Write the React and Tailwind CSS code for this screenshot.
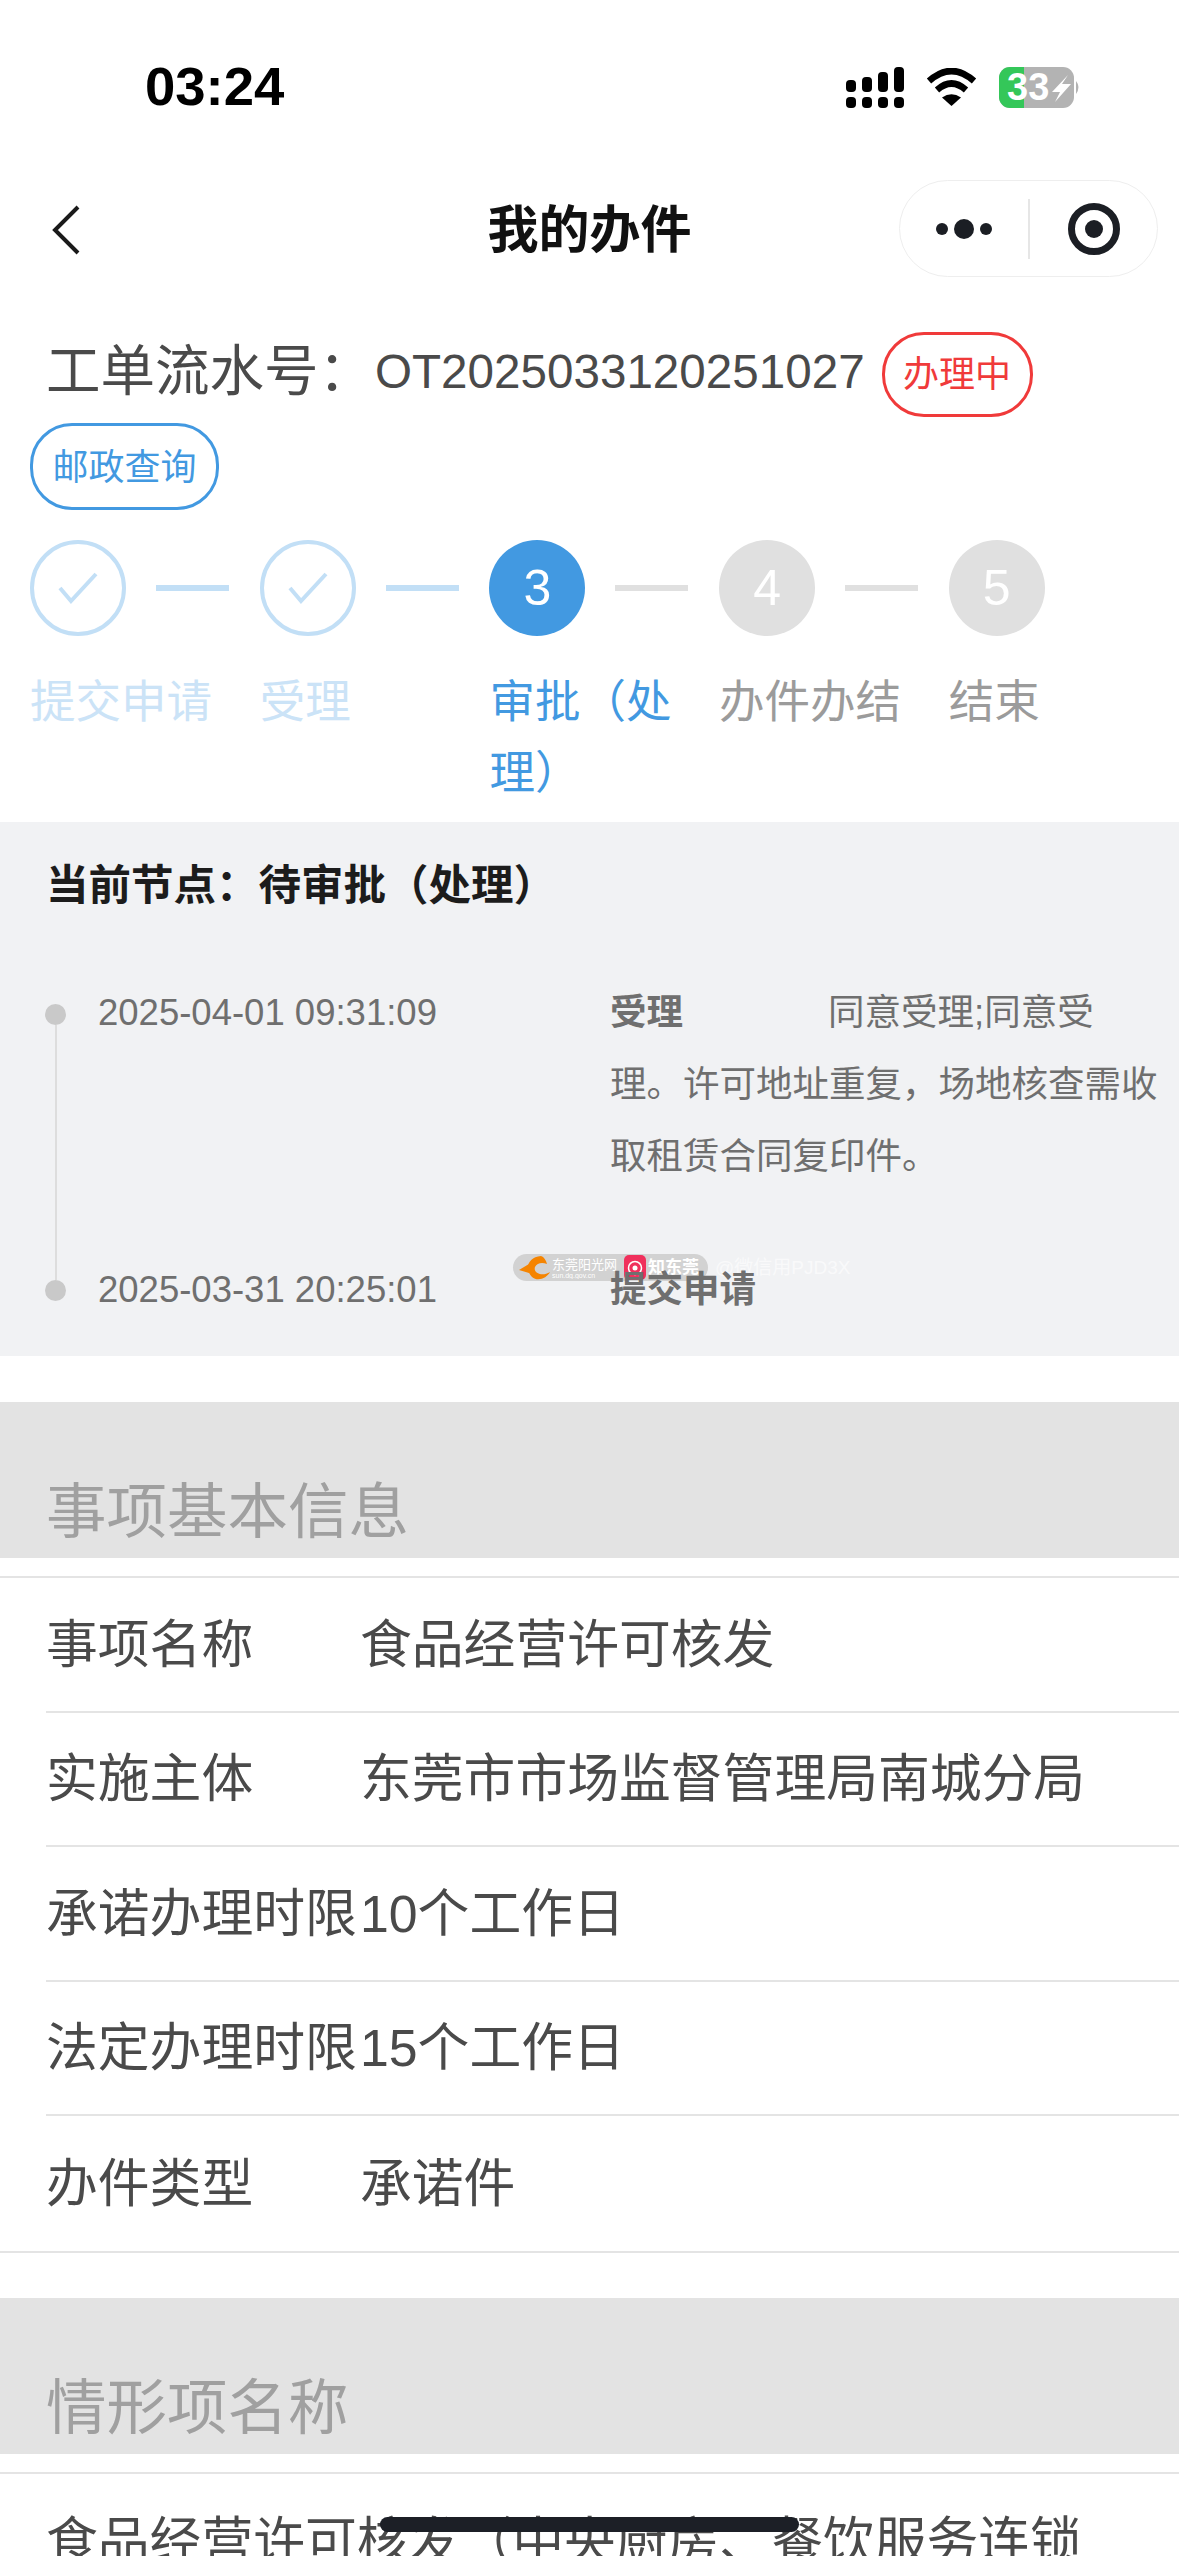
const font = { fontFamily: '"Liberation Sans", "Noto Sans CJK SC", sans-serif' };

const steps = [
  { label: "提交申请", state: "done" },
  { label: "受理", state: "done" },
  { label: "审批（处理）", state: "active", num: 3 },
  { label: "办件办结", state: "todo", num: 4 },
  { label: "结束", state: "todo", num: 5 },
];

const rows = [
  ["事项名称", "食品经营许可核发"],
  ["实施主体", "东莞市市场监督管理局南城分局"],
  ["承诺办理时限", "10个工作日"],
  ["法定办理时限", "15个工作日"],
  ["办件类型", "承诺件"],
];

function StatusBar() {
  return (
    <div className="flex h-[174px] items-center justify-between pr-[98px] pl-[145px]">
      <span className="text-[54.5px] leading-none font-bold text-black">03:24</span>
      <div className="flex items-start gap-[22px] pt-[1px]">
        <svg width="58" height="41" viewBox="0 0 58 41" fill="#000">
          <rect x="0" y="13" width="10" height="12" rx="4" />
          <rect x="16" y="10" width="10" height="15" rx="4" />
          <rect x="32" y="5" width="10" height="20" rx="4" />
          <rect x="48" y="0" width="10" height="25" rx="4" />
          <rect x="0" y="30" width="10" height="11" rx="4" />
          <rect x="16" y="30" width="10" height="11" rx="4" />
          <rect x="32" y="30" width="10" height="11" rx="4" />
          <rect x="48" y="30" width="10" height="11" rx="4" />
        </svg>
        <svg width="51" height="39" viewBox="0 0 51 39" fill="none" className="mt-[1px]">
          <path d="M3 13 Q25.5 -7 48 13" stroke="#000" strokeWidth="6.5" />
          <path d="M11 22 Q25.5 9 40 22" stroke="#000" strokeWidth="6.5" />
          <path d="M25.5 38 L16 29.5 Q25.5 23 35 29.5 Z" fill="#000" />
        </svg>
        <svg width="82" height="41" viewBox="0 0 82 41">
          <rect x="0" y="0" width="75" height="41" rx="11" fill="#b3b3b3" />
          <path d="M11 0 H25 V41 H11 A11 11 0 0 1 0 30 V11 A11 11 0 0 1 11 0 Z" fill="#34c759" />
          <path d="M77 14 Q82 20 77 27 Z" fill="#b3b3b3" />
          <text x="8" y="33" fill="#fff" fontSize="38" fontWeight="700" style={font}>33</text>
          <path d="M69 8 L53 25 H61 L56 35 L72 17 H63 Z" fill="#fff" />
        </svg>
      </div>
    </div>
  );
}

function NavBar() {
  return (
    <div className="grid h-[112px] grid-cols-[1fr_auto_1fr] items-center px-[21px]">
      <svg width="28" height="50" viewBox="0 0 28 50" fill="none" className="ml-[31px]">
        <path d="M26 2 L3 25 L26 48" stroke="#1a1a1a" strokeWidth="4" />
      </svg>
      <div className="text-[51px] leading-none font-bold text-[#111]">我的办件</div>
      <div className="flex justify-end">
        <div className="-mt-[3px] flex h-[97px] w-[259px] items-center rounded-full border border-[#eeeeee] bg-white">
          <div className="flex w-[128px] items-center justify-center">
            <svg width="56" height="22" viewBox="0 0 56 22" fill="#1b1e24">
              <circle cx="6" cy="11" r="6" />
              <circle cx="28" cy="11" r="10" />
              <circle cx="50" cy="11" r="6" />
            </svg>
          </div>
          <div className="h-[60px] w-[2px] bg-[#e6e6e6]" />
          <div className="flex flex-1 items-center justify-center">
            <svg width="52" height="52" viewBox="0 0 52 52" fill="none">
              <circle cx="26" cy="26" r="22.5" stroke="#1b1e24" strokeWidth="7" />
              <circle cx="26" cy="26" r="9" fill="#1b1e24" />
            </svg>
          </div>
        </div>
      </div>
    </div>
  );
}

function Step({ step, last }) {
  const line = step.state === "done" ? "bg-[#c2dff6]" : "bg-[#e0e0e0]";
  const labelColor =
    step.state === "done"
      ? "text-[#cbe3f7]"
      : step.state === "active"
        ? "text-[#4299e1]"
        : "text-[#9b9b9b]";
  return (
    <div className="w-[229.7px] shrink-0">
      <div className="flex items-center">
        {step.state === "done" ? (
          <div className="flex h-[96px] w-[96px] items-center justify-center rounded-full border-[4px] border-[#c2dff6]">
            <svg width="40" height="32" viewBox="0 0 40 32" fill="none">
              <path d="M2 16 L13 29 L38 2" stroke="#c2dff6" strokeWidth="4" />
            </svg>
          </div>
        ) : (
          <div
            className={`flex h-[96px] w-[96px] items-center justify-center rounded-full text-[50px] text-white ${
              step.state === "active" ? "bg-[#4299e1]" : "bg-[#e0e0e0]"
            }`}
          >
            {step.num}
          </div>
        )}
        {!last && <div className={`ml-[30px] h-[6px] w-[73px] ${line}`} />}
      </div>
      <div className={`mt-[31px] w-[200px] text-[45.5px] leading-[71px] ${labelColor}`}>
        {step.label}
      </div>
    </div>
  );
}

function Watermark() {
  return (
    <div className="absolute top-[432px] left-[513px] flex items-center gap-[7px]">
      <div className="flex h-[27px] w-[195px] items-center rounded-full bg-[#d2d2d2] pl-[5px]">
        <svg width="33" height="26" viewBox="0 0 33 26" fill="none">
          <path d="M23 1 C10 2 6 14 14 22 C20 27 29 23 32 17 C24 22 15 18 17 12 C19 8 24 7 29 9 C28 5 26 2 23 1 Z" fill="#f58400" />
          <path d="M1 15 L11 9 L11 18 Z" fill="#f58400" />
        </svg>
        <div className="ml-[1px] flex w-[67px] flex-col overflow-hidden text-white">
          <span className="text-[13px] leading-[15px] whitespace-nowrap">东莞阳光网</span>
          <span className="text-[7px] leading-[7px] whitespace-nowrap">sun.dg.gov.cn</span>
        </div>
        <div className="ml-[5px] flex h-[25px] w-[22px] items-center justify-center rounded-[5px] bg-[#f0305c]">
          <svg width="16" height="16" viewBox="0 0 16 16" fill="none">
            <circle cx="8" cy="8" r="6.5" stroke="#fff" strokeWidth="1.5" />
            <circle cx="8" cy="8" r="2.5" fill="#fff" />
          </svg>
        </div>
        <span className="ml-[2px] text-[17px] leading-none font-bold whitespace-nowrap text-white">知东莞</span>
      </div>
      <span className="text-[19px] leading-none whitespace-nowrap text-white/60">@微信用PJD3X</span>
    </div>
  );
}

function Timeline() {
  return (
    <div className="relative h-[534px] bg-[#f1f2f4] pt-[42px]">
      <Watermark />
      <div className="pl-[46px] text-[42.5px] leading-[44px] font-bold text-[#1c1c1c]">
        当前节点：待审批（处理）
      </div>
      <div className="mt-[69px] flex text-[36.5px] leading-[72px] text-[#6f6f6f]">
        <div className="ml-[45px] flex w-[21px] flex-col items-center pt-[27px]">
          <div className="h-[21px] w-[21px] shrink-0 rounded-full bg-[#c9c9c9]" />
          <div className="w-[2px] flex-1 bg-[#dddddd]" />
        </div>
        <div className="ml-[32px] w-[512px]">2025-04-01 09:31:09</div>
        <div className="w-[552px] pb-[61px]">
          <span className="inline-block w-[218px] font-bold">受理</span>
          同意受理;同意受理。许可地址重复，场地核查需收取租赁合同复印件。
        </div>
      </div>
      <div className="relative flex text-[36.5px] leading-[72px] text-[#6f6f6f]">
        <div className="ml-[45px] flex w-[21px] flex-col items-center">
          <div className="h-[26px] w-[2px] bg-[#dddddd]" />
          <div className="h-[21px] w-[21px] shrink-0 rounded-full bg-[#c9c9c9]" />
        </div>
        <div className="ml-[32px] w-[512px]">2025-03-31 20:25:01</div>
        <div className="font-bold">提交申请</div>
      </div>
    </div>
  );
}

function SectionHeader({ title }) {
  return (
    <div className="flex h-[156px] items-end bg-[#e3e3e3] pb-[16px] pl-[46px] text-[60.5px] leading-[60px] text-[#a0a0a0]">
      {title}
    </div>
  );
}

export default function App() {
  return (
    <div className="relative h-[2556px] w-[1179px] overflow-hidden bg-white" style={font}>
      <StatusBar />
      <NavBar />

      <div className="mt-[46px] flex flex-wrap items-center px-[30px]">
        <span className="ml-[16px] pb-[6px] text-[54.5px] leading-[78px] text-[#4a4a4a]">工单流水号：</span>
        <span className="ml-[2px] pb-[6px] text-[47.6px] leading-[78px] text-[#4a4a4a]">OT2025033120251027</span>
        <span className="ml-[17px] flex h-[85px] w-[151px] items-center justify-center rounded-[42px] border-[3px] border-[#f03a3a] text-[36px] text-[#f03a3a]">
          办理中
        </span>
        <span className="mt-[6px] flex h-[87px] w-[189px] items-center justify-center rounded-[42px] border-[3px] border-[#4299e1] text-[36px] text-[#4299e1]">
          <span className="mt-[2px]">邮政查询</span>
        </span>
      </div>

      <div className="mt-[30px] flex px-[30px] pb-[13px]">
        {steps.map((s, i) => (
          <Step key={s.label} step={s} last={i === steps.length - 1} />
        ))}
      </div>

      <Timeline />

      <div className="mt-[46px]">
        <SectionHeader title="事项基本信息" />
        <div className="mt-[18px] border-t-2 border-b-2 border-[#e4e4e4]">
          {rows.map((r, i) => (
            <div key={r[0]} className="pl-[46px]">
              <div
                className={`flex h-[134.5px] items-center pt-[3px] text-[51.8px] whitespace-nowrap text-[#4a4a4a] ${
                  i < rows.length - 1 ? "border-b-2 border-[#e4e4e4]" : ""
                }`}
              >
                <div className="w-[314px] shrink-0">{r[0]}</div>
                <div>{r[1]}</div>
              </div>
            </div>
          ))}
        </div>
      </div>

      <div className="mt-[45px]">
        <SectionHeader title="情形项名称" />
        <div className="mt-[18px] border-t-2 border-[#e4e4e4] pt-[38px] pl-[46px] text-[51.8px] leading-[60px] whitespace-nowrap text-[#4a4a4a]">
          食品经营许可核发（中央厨房、餐饮服务连锁
        </div>
      </div>

      <div className="absolute top-[2517px] left-[380px] h-[15px] w-[419px] rounded-full bg-[#1c1f26]" />
    </div>
  );
}
